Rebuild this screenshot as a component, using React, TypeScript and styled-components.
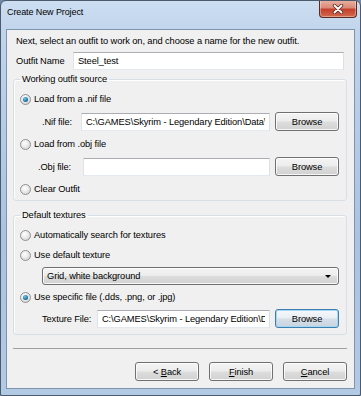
import styled, { createGlobalStyle, css } from 'styled-components';

const GlobalStyle = createGlobalStyle`
  html, body {
    margin: 0;
    padding: 0;
    background: #6f8aa8;
  }
  body {
    font-family: 'Liberation Sans', Arial, sans-serif;
    font-size: 9.3px;
    letter-spacing: -0.1px;
    color: #000;
  }
`;

const NIF_PATH = 'C:\\GAMES\\Skyrim - Legendary Edition\\Data\\1\\meshes\\armor\\steel\\cuirass.nif';
const TEX_PATH = 'C:\\GAMES\\Skyrim - Legendary Edition\\Data\\textures\\armor\\steel.dds';

const RadioOption = ({ checked, label }: { checked?: boolean; label: string }) => (
  <RadioRow>
    <RadioDot $checked={checked} />
    <span>{label}</span>
  </RadioRow>
);

const FileRow = ({
  label,
  value,
  indent,
  labelWidth,
  focused,
}: {
  label: string;
  value: string;
  indent: number;
  labelWidth: number;
  focused?: boolean;
}) => (
  <FileLine $indent={indent}>
    <FileLabel $width={labelWidth}>{label}</FileLabel>
    <TextInput value={value} readOnly />
    <Button $focused={focused}>Browse</Button>
  </FileLine>
);

const App = () => {
  return (
    <>
      <GlobalStyle />
      <Window>
        <TitleBar>
          <Title>Create New Project</Title>
          <CloseButton>
            <svg width="12" height="10" viewBox="0 0 12 10">
              <path d="M2.5 1.5 L9.5 8.5 M9.5 1.5 L2.5 8.5" stroke="#5a2a22" strokeWidth="3.4" strokeLinecap="round" />
              <path d="M2.5 1.5 L9.5 8.5 M9.5 1.5 L2.5 8.5" stroke="#fff" strokeWidth="1.8" strokeLinecap="round" />
            </svg>
          </CloseButton>
        </TitleBar>
        <Client>
          <Intro>Next, select an outfit to work on, and choose a name for the new outfit.</Intro>
          <NameRow>
            <NameLabel>Outfit Name</NameLabel>
            <TextInput value="Steel_test" readOnly />
          </NameRow>

          <Group $top={1}>
            <Legend>Working outfit source</Legend>
            <Stack $gap={5} $bottom={3}>
              <RadioOption checked label="Load from a .nif file" />
              <FileRow label=".Nif file:" value={NIF_PATH} indent={22} labelWidth={39} />
              <RadioOption label="Load from .obj file" />
              <FileRow label=".Obj file:" value="" indent={18} labelWidth={45} />
              <RadioOption label="Clear Outfit" />
            </Stack>
          </Group>

          <Group $top={6}>
            <Legend>Default textures</Legend>
            <Stack $gap={4} $bottom={6}>
              <RadioOption label="Automatically search for textures" />
              <RadioOption label="Use default texture" />
              <Select>
                <span>Grid, white background</span>
                <Arrow />
              </Select>
              <RadioOption checked label="Use specific file (.dds, .png, or .jpg)" />
              <FileRow label="Texture File:" value={TEX_PATH} indent={22} labelWidth={55} focused />
            </Stack>
          </Group>

          <Separator />

          <Footer>
            <Button>
              {'< '}
              <u>B</u>ack
            </Button>
            <Button>
              <u>F</u>inish
            </Button>
            <Button>
              <u>C</u>ancel
            </Button>
          </Footer>
        </Client>
      </Window>
    </>
  );
};

export default App;

const Window = styled.div`
  width: 361px;
  height: 396px;
  box-sizing: border-box;
  border: 1px solid #4b5a6c;
  border-radius: 6px 6px 2px 2px;
  background: linear-gradient(180deg, #cddef1 0%, #c0d4eb 8%, #a9c3e1 60%, #b3cae4 100%);
  padding: 0 5px 6px 5px;
  display: flex;
  flex-direction: column;
  overflow: hidden;
`;

const TitleBar = styled.div`
  height: 28px;
  display: flex;
  align-items: flex-start;
  justify-content: space-between;
  flex-shrink: 0;
`;

const Title = styled.div`
  font-size: 9px;
  line-height: 16px;
  margin: 3px 0 0 1px;
  color: #000;
`;

const CloseButton = styled.div`
  width: 38px;
  height: 18px;
  margin: -1px -2px 0 0;
  box-sizing: border-box;
  border: 1px solid #5d2a22;
  border-top: none;
  border-radius: 0 0 4px 4px;
  background: linear-gradient(180deg, #eab3a6 0%, #dc8a77 45%, #c4412b 55%, #d2694e 100%);
  box-shadow: inset 0 0 0 1px rgba(255, 255, 255, 0.35);
  display: flex;
  align-items: center;
  justify-content: center;
`;

const Client = styled.div`
  flex: 1;
  background: #f0f0f0;
  border: 1px solid #7e93ad;
  padding: 3px 7px 0 6px;
  display: flex;
  flex-direction: column;
`;

const Intro = styled.div`
  line-height: 16px;
  padding-left: 3px;
  white-space: nowrap;
`;

const NameRow = styled.div`
  display: flex;
  align-items: center;
  height: 18px;
  margin-top: 3px;
  padding: 0 3px 0 3px;
`;

const NameLabel = styled.span`
  width: 57px;
  flex-shrink: 0;
  white-space: nowrap;
`;

const TextInput = styled.input`
  flex: 1;
  min-width: 0;
  height: 18px;
  box-sizing: border-box;
  font: inherit;
  letter-spacing: inherit;
  color: #000;
  background: #fff;
  border: 1px solid;
  border-color: #abadb3 #dbdfe6 #e3e9ef #e2e3ea;
  padding: 0 4px;
  outline: none;
`;

const Group = styled.fieldset<{ $top: number }>`
  margin: ${({ $top }) => $top}px 0 0 0;
  padding: 0 7px 0 6px;
  border: 1px solid #d5dfe5;
  border-radius: 3px;
  box-shadow: inset 1px 1px 0 #fff;
  min-width: 0;
`;

const Legend = styled.legend`
  padding: 0 2px;
  margin-left: 0;
  line-height: 16px;
`;

const Stack = styled.div<{ $gap: number; $bottom: number }>`
  display: flex;
  flex-direction: column;
  gap: ${({ $gap }) => $gap}px;
  padding: 4px 0 ${({ $bottom }) => $bottom}px 0;
`;

const RadioRow = styled.div`
  height: 16px;
  display: flex;
  align-items: center;
  gap: 3px;
  white-space: nowrap;
`;

const RadioDot = styled.span<{ $checked?: boolean }>`
  width: 9px;
  height: 9px;
  border-radius: 50%;
  border: 1px solid #8f9090;
  background: radial-gradient(circle at 40% 35%, #ffffff 0%, #e8e8e8 50%, #c8c8c8 100%);
  position: relative;
  flex-shrink: 0;
  ${({ $checked }) =>
    $checked &&
    css`
      &::after {
        content: '';
        position: absolute;
        left: 2px;
        top: 2px;
        width: 5px;
        height: 5px;
        border-radius: 50%;
        background: radial-gradient(circle at 40% 35%, #6cd0f0 0%, #2a7db0 50%, #163e5c 100%);
      }
    `}
`;

const FileLine = styled.div<{ $indent: number }>`
  height: 19px;
  display: flex;
  align-items: center;
  padding-left: ${({ $indent }) => $indent}px;
  gap: 5px;
`;

const FileLabel = styled.span<{ $width: number }>`
  width: ${({ $width }) => $width - 5}px;
  flex-shrink: 0;
  white-space: nowrap;
`;

const Button = styled.button<{ $focused?: boolean }>`
  width: 64px;
  height: 19px;
  flex-shrink: 0;
  box-sizing: border-box;
  padding: 0;
  font: inherit;
  letter-spacing: inherit;
  color: #000;
  border: 1px solid ${({ $focused }) => ($focused ? '#3c7fb1' : '#707070')};
  border-radius: 3px;
  background: ${({ $focused }) =>
    $focused
      ? 'linear-gradient(180deg, #f6f9fc 0%, #e9eef4 48%, #d6dfe8 52%, #c9d4df 100%)'
      : 'linear-gradient(180deg, #f4f4f4 0%, #ececec 48%, #dddddd 52%, #d1d1d1 100%)'};
  box-shadow: inset 0 0 0 1px ${({ $focused }) => ($focused ? '#a6d6f2' : 'rgba(255,255,255,0.8)')};
  display: flex;
  align-items: center;
  justify-content: center;
  white-space: pre;
`;

const Select = styled.div`
  margin-left: 22px;
  height: 18px;
  box-sizing: border-box;
  border: 1px solid #707070;
  border-radius: 3px;
  background: linear-gradient(180deg, #f4f4f4 0%, #ececec 48%, #dddddd 52%, #d1d1d1 100%);
  box-shadow: inset 0 0 0 1px rgba(255, 255, 255, 0.8);
  display: flex;
  align-items: center;
  justify-content: space-between;
  padding: 0 7px 0 4px;
`;

const Arrow = styled.span`
  width: 0;
  height: 0;
  border-left: 3px solid transparent;
  border-right: 3px solid transparent;
  border-top: 3px solid #000;
`;

const Separator = styled.div`
  height: 1px;
  background: #a0a0a0;
  margin: 13px 0 0 0;
`;

const Footer = styled.div`
  display: flex;
  justify-content: flex-end;
  gap: 10px;
  margin-top: 13px;
`;
